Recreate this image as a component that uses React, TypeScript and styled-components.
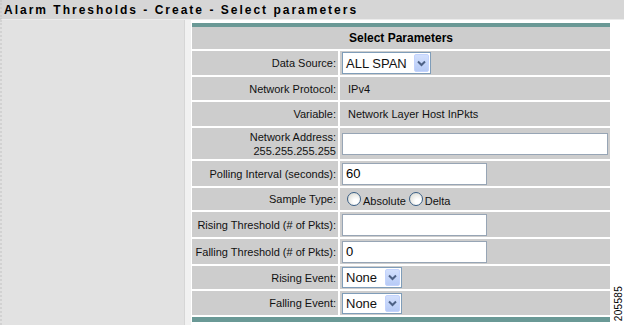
import React from 'react';
import styled, { createGlobalStyle } from 'styled-components';

const GlobalStyle = createGlobalStyle`
    html, body {
        margin: 0;
        padding: 0;
        background: #ffffff;
    }
    body {
        font-family: "Liberation Sans", Arial, sans-serif;
        color: #000;
    }
`;

const Page = styled.div`
    width: 624px;
    height: 325px;
    overflow: hidden;
    display: flex;
    flex-direction: column;
`;

const TitleBar = styled.div`
    height: 19px;
    background: #d6d6d6;
    border-bottom: 1px solid #ececec;
    border-left: 2px dotted #cbcbcb;
    padding-left: 2px;
    display: flex;
    align-items: center;
    font-size: 12px;
    font-weight: bold;
    letter-spacing: 2px;
    white-space: nowrap;
`;

const Body = styled.div`
    flex: 1;
    display: flex;
`;

const LeftPanel = styled.div`
    width: 185px;
    background: #e2e2e2;
    border-left: 2px dotted #d2d2d2;
    border-right: 1px solid #d6d6d6;
    box-sizing: border-box;
    flex: none;
`;

const Spacer = styled.div`
    width: 6px;
    background: #f1f1f1;
    border-right: 1px solid #fff;
    flex: none;
`;

const Main = styled.div`
    padding-top: 3px;
    flex: none;
`;

const Grid = styled.div`
    width: 418px;
    display: grid;
    grid-template-columns: 146px 270px;
    grid-template-rows: 22px 24px 23px 24px 31px 25px 22px 25px 25px 23px 24px;
    gap: 2px;
    background: #ffffff;
    border-top: 4px solid #6a9996;
    border-bottom: 5px solid #6a9996;
    padding-bottom: 2px;
`;

const Header = styled.div`
    grid-column: 1 / -1;
    background: #cdcdcd;
    font-size: 12px;
    font-weight: bold;
    display: flex;
    align-items: center;
    justify-content: center;
`;

const Label = styled.div`
    background: #cdcdcd;
    font-size: 11px;
    line-height: 14px;
    color: #111;
    text-align: right;
    padding-right: 2px;
    display: flex;
    flex-direction: column;
    justify-content: center;
    align-items: flex-end;
`;

const Value = styled.div`
    background: #cdcdcd;
    display: flex;
    align-items: center;
    padding-left: 2px;
    font-size: 11px;
    color: #111;
`;

const Plain = styled.span`
    padding-left: 6px;
`;

const TextBox = styled.input<{ $w: number }>`
    width: ${(p) => p.$w}px;
    height: 22px;
    box-sizing: border-box;
    border: 1px solid #97a5b5;
    background: #fff;
    font-family: "Liberation Sans", Arial, sans-serif;
    font-size: 13px;
    padding: 0 3px;
    margin: 0;
    outline: none;
`;

const SelectBox = styled.div<{ $w: number; $h: number }>`
    width: ${(p) => p.$w}px;
    height: ${(p) => p.$h}px;
    box-sizing: border-box;
    border: 1px solid #7f9db9;
    background: #fff;
    display: flex;
    align-items: stretch;
    padding: 1px;
    gap: 2px;
`;

const SelectText = styled.span`
    flex: 1;
    font-size: 13px;
    display: flex;
    align-items: center;
    padding-left: 2px;
    white-space: nowrap;
`;

const ArrowBtn = styled.span`
    width: 15px;
    background: linear-gradient(#d3e0fd, #b7cbf6);
    border: 1px solid #c3d3fd;
    border-radius: 2px;
    box-sizing: border-box;
    display: flex;
    align-items: center;
    justify-content: center;
`;

const RadioGroup = styled.div`
    display: flex;
    align-items: center;
    padding-left: 5px;
    padding-top: 3px;
`;

const RadioCircle = styled.span`
    width: 12px;
    height: 12px;
    border-radius: 50%;
    border: 1px solid #3a5f86;
    background: radial-gradient(circle at 65% 70%, #ffffff 20%, #dcdcd5 85%);
    flex: none;
    margin-top: -4px;
`;

const RadioText = styled.span`
    font-size: 11px;
    margin: 0 3px 0 2px;
`;

const Side = styled.div`
    flex: 1;
    display: flex;
    align-items: flex-end;
    justify-content: center;
    padding: 0 0 4px 2px;
`;

const FigNum = styled.span`
    writing-mode: vertical-rl;
    transform: rotate(180deg);
    font-size: 10px;
    letter-spacing: 0.3px;
    color: #000;
`;

const Chevron = () => (
    <svg width="9" height="7" viewBox="0 0 9 7">
        <path d="M1 1.5 L4.5 5 L8 1.5" fill="none" stroke="#4d6185" strokeWidth="2" />
    </svg>
);

const Select = ({ text, w, h }: { text: string; w: number; h: number }) => (
    <SelectBox $w={w} $h={h}>
        <SelectText>{text}</SelectText>
        <ArrowBtn><Chevron /></ArrowBtn>
    </SelectBox>
);

const Radio = ({ label }: { label: string }) => (
    <>
        <RadioCircle />
        <RadioText>{label}</RadioText>
    </>
);

const App = (): React.ReactElement => {
    return (
        <Page>
            <GlobalStyle />
            <TitleBar>Alarm Thresholds - Create - Select parameters</TitleBar>
            <Body>
                <LeftPanel />
                <Spacer />
                <Main>
                    <Grid>
                        <Header>Select Parameters</Header>

                        <Label>Data Source:</Label>
                        <Value><Select text="ALL SPAN" w={89} h={22} /></Value>

                        <Label>Network Protocol:</Label>
                        <Value><Plain>IPv4</Plain></Value>

                        <Label>Variable:</Label>
                        <Value><Plain>Network Layer Host InPkts</Plain></Value>

                        <Label>
                            <span>Network Address:</span>
                            <span>255.255.255.255</span>
                        </Label>
                        <Value><TextBox $w={266} defaultValue="" /></Value>

                        <Label>Polling Interval (seconds):</Label>
                        <Value><TextBox $w={145} defaultValue="60" /></Value>

                        <Label>Sample Type:</Label>
                        <Value>
                            <RadioGroup>
                                <Radio label="Absolute" />
                                <Radio label="Delta" />
                            </RadioGroup>
                        </Value>

                        <Label>Rising Threshold (# of Pkts):</Label>
                        <Value><TextBox $w={145} defaultValue="" /></Value>

                        <Label>Falling Threshold (# of Pkts):</Label>
                        <Value><TextBox $w={145} defaultValue="0" /></Value>

                        <Label>Rising Event:</Label>
                        <Value><Select text="None" w={60} h={21} /></Value>

                        <Label>Falling Event:</Label>
                        <Value><Select text="None" w={60} h={21} /></Value>
                    </Grid>
                </Main>
                <Side>
                    <FigNum>205585</FigNum>
                </Side>
            </Body>
        </Page>
    );
};

export default App;
